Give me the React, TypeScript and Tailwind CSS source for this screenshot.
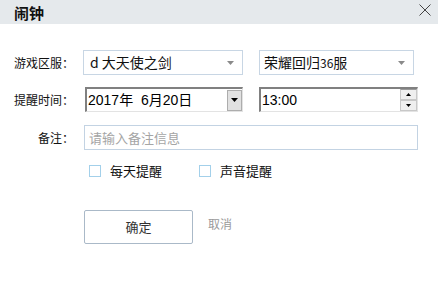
import React from 'react';

const cjk = { fontFamily: '"Noto Sans CJK SC", "Liberation Sans", sans-serif' };
const arial = { fontFamily: '"Liberation Sans", "Noto Sans CJK SC", sans-serif' };

const Caret: React.FC<{ color?: string; size?: number }> = ({ color = '#8a8a8a', size = 7 }) => (
    <svg width={size} height={4} viewBox="0 0 7 4">
        <path d="M0 0 L7 0 L3.5 4 Z" fill={color} />
    </svg>
);

export default function App() {
    return (
        <div className="w-[438px] h-[289px] bg-white flex flex-col" style={cjk}>
            {/* Title bar */}
            <header className="h-[24px] bg-[#e5e9ec] flex items-center justify-between pl-[14px] pr-[7px]">
                <span className="text-[15px] font-bold text-[#111] leading-none">闹钟</span>
                <svg width="12" height="12" viewBox="0 0 12 12" className="-mt-[4px]">
                    <path d="M0.5 0.5 L11.5 11.5 M11.5 0.5 L0.5 11.5" stroke="#444" strokeWidth="1" />
                </svg>
            </header>

            <main className="flex flex-col pt-[26px]">
                {/* Row 1 */}
                <div className="flex items-center h-[25px]">
                    <label className="w-[83px] pr-[9px] text-right text-[12px] text-[#111]">游戏区服：</label>
                    <div className="w-[160px] h-[25px] border border-[#c8d6e4] flex items-center justify-between pl-[6px] pr-[8px]">
                        <span className="text-[14px] text-[#111]">d 大天使之剑</span>
                        <Caret />
                    </div>
                    <div className="ml-[16px] w-[155px] h-[25px] border border-[#c8d6e4] flex items-center justify-between pl-[4px] pr-[8px]">
                        <span className="text-[14px] text-[#111]">荣耀回归<span className="text-[12px]">36</span>服</span>
                        <Caret />
                    </div>
                </div>

                {/* Row 2 */}
                <div className="flex items-center h-[25px] mt-[12px]">
                    <label className="w-[83px] pr-[9px] text-right text-[12px] text-[#111]">提醒时间：</label>
                    <div className="ml-[2px] w-[158px] h-[25px] border-t-2 border-l-2 border-[#808080] border-b border-r border-b-[#e3e3e3] border-r-[#e3e3e3] flex items-center pl-[1px]">
                        <span className="flex-1 text-[14px] text-black" style={arial}>2017年&nbsp;&nbsp;6月20日</span>
                        <div className="w-[15px] h-[21px] bg-[#e1e1e1] border border-[#adadad] flex items-center justify-center">
                            <Caret color="#000" size={7} />
                        </div>
                    </div>
                    <div className="ml-[16px] w-[159px] h-[25px] border-t-2 border-l-2 border-[#808080] border-b border-r border-b-[#e3e3e3] border-r-[#e3e3e3] flex items-center pl-[1px]">
                        <span className="flex-1 text-[14px] text-black" style={arial}>13:00</span>
                        <div className="w-[17px] h-[22px] flex flex-col">
                            <div className="flex-1 bg-[#efefef] border border-[#c8c8c8] border-t-[#9a9a9a] flex items-center justify-center">
                                <svg width="5" height="3" viewBox="0 0 5 3"><path d="M0 3 L5 3 L2.5 0 Z" fill="#000" /></svg>
                            </div>
                            <div className="flex-1 bg-[#efefef] border border-[#c8c8c8] flex items-center justify-center">
                                <svg width="5" height="3" viewBox="0 0 5 3"><path d="M0 0 L5 0 L2.5 3 Z" fill="#000" /></svg>
                            </div>
                        </div>
                    </div>
                </div>

                {/* Row 3 */}
                <div className="flex items-center h-[25px] mt-[13px]">
                    <label className="w-[84px] pr-[10px] text-right text-[12px] text-[#111]">备注：</label>
                    <div className="w-[334px] h-[25px] border border-[#c3d3e3] flex items-center pl-[4px]">
                        <span className="text-[13px] text-[#a5a5a5]">请输入备注信息</span>
                    </div>
                </div>

                {/* Checkboxes */}
                <div className="flex items-center mt-[14px] pl-[89px] h-[14px]">
                    <span className="w-[12px] h-[12px] border border-[#a3d0ea]" />
                    <span className="ml-[9px] text-[13px] text-[#111]">每天提醒</span>
                    <span className="ml-[37px] w-[12px] h-[12px] border border-[#a3d0ea]" />
                    <span className="ml-[9px] text-[13px] text-[#111]">声音提醒</span>
                </div>

                {/* Buttons */}
                <div className="flex items-center mt-[32px] pl-[84px]">
                    <button className="w-[109px] h-[34px] border border-[#aab9c8] rounded-[2px] bg-white text-[13px] text-[#333]">确定</button>
                    <span className="ml-[15px] text-[12px] text-[#9a9a9a] -mt-[6px]">取消</span>
                </div>
            </main>
        </div>
    );
}
